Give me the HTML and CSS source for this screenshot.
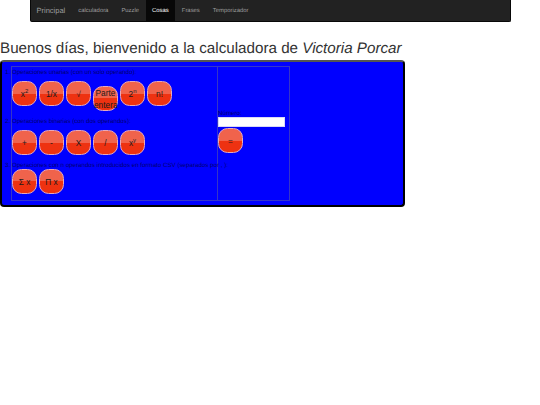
FILE: index.html
```html
<!DOCTYPE html>
<html lang="es">
<head>
<meta charset="utf-8">
<title>Calculadora</title>
<link rel="stylesheet" href="styles.css">
</head>
<body>
<nav class="navbar">
  <a class="brand" href="#">Principal</a>
  <a class="link" href="#">calculadora</a>
  <a class="link" href="#">Puzzle</a>
  <a class="link active" href="#">Cosas</a>
  <a class="link" href="#">Frases</a>
  <a class="link" href="#">Temporizador</a>
</nav>
<h1 class="title">Buenos días, bienvenido a la calculadora de <em>Victoria Porcar</em></h1>
<section class="panel">
  <div class="grid">
    <ol class="ops">
      <li class="op op-unary">
        <p class="label">Operaciones unarias (con un solo operando):</p>
        <div class="keys">
          <button class="key">x<sup>2</sup></button>
          <button class="key">1/x</button>
          <button class="key">√</button>
          <button class="key key-low">Parte entera</button>
          <button class="key">2<sup>n</sup></button>
          <button class="key">n!</button>
        </div>
      </li>
      <li class="op op-binary">
        <p class="label">Operaciones binarias (con dos operandos):</p>
        <div class="keys">
          <button class="key">+</button>
          <button class="key">-</button>
          <button class="key">X</button>
          <button class="key">/</button>
          <button class="key">x<sup>y</sup></button>
        </div>
      </li>
      <li class="op op-csv">
        <p class="label">Operaciones con n operandos introducidos en formato CSV (separados por , ):</p>
        <div class="keys">
          <button class="key">Σ x</button>
          <button class="key">Π x</button>
        </div>
      </li>
    </ol>
    <div class="side">
      <label class="field-label" for="num">Número:</label>
      <input class="field" id="num" type="text">
      <button class="key">=</button>
    </div>
  </div>
</section>
</body>
</html>
```
FILE: styles.css
```css
* { box-sizing: border-box; }
html, body { margin: 0; padding: 0; }
body {
  font-family: "Liberation Sans", Arial, sans-serif;
  background: #fff;
  color: #333;
  width: 540px;
  height: 405px;
  overflow: hidden;
  text-rendering: geometricPrecision;
}
.navbar {
  display: flex;
  align-items: stretch;
  height: 22px;
  margin: 0 29.5px;
  background: #222;
  border: 1px solid #080808;
  border-top: 0;
  border-radius: 0 0 2px 2px;
}
.brand {
  display: flex;
  align-items: center;
  padding: 0 6.5px 0 6px;
  font-size: 7.5px;
  color: #9d9d9d;
  text-decoration: none;
}
.link {
  display: flex;
  align-items: center;
  padding: 0 6.5px;
  font-size: 5.9px;
  color: #9d9d9d;
  text-decoration: none;
}
.link.active { background: #080808; color: #fff; }
.title {
  margin: 17px 0 0;
  font-size: 15.2px;
  line-height: 19px;
  font-weight: 400;
  color: #333;
  white-space: nowrap;
}
.panel {
  width: 405px;
  height: 147px;
  margin-top: 2px;
  padding: 4px 0 0 9px;
  background: #00f;
  border: 2px solid #000;
  border-top-color: #555;
  border-radius: 4px;
}
.grid {
  display: grid;
  grid-template-columns: 206px 72px;
  width: 279px;
  height: 135px;
  border: 1px solid #3535c8;
}
.ops {
  margin: 0;
  padding: 0;
  list-style-position: outside;
  color: #000070;
  font-size: 6.2px;
  border-right: 1px solid #3535c8;
}
.op-unary { height: 49px; }
.op-binary { height: 44px; }
.op-csv { height: 34px; }
.label {
  margin: 0;
  height: 9px;
  padding-top: 2px;
  line-height: 8px;
  white-space: nowrap;
}
.keys {
  display: flex;
  align-items: flex-start;
  gap: 2px;
  margin-top: 5px;
}
.op-csv .keys { margin-top: 0; }
.key {
  flex: none;
  width: 25px;
  height: 25px;
  margin: 0;
  padding: 0;
  font-family: "Liberation Sans", Arial, sans-serif;
  font-size: 8.3px;
  line-height: 12px;
  color: #1a1a1a;
  background: linear-gradient(#f0634c 0, #f0634c 50%, #ee3211 50%, #ee3211 100%);
  border: 1px solid #e8a8b8;
  border-radius: 9.5px;
}
.key-low { margin-top: 5px; }
.key sup { font-size: 6px; line-height: 0; }
.side {
  display: flex;
  flex-direction: column;
  align-items: flex-start;
  padding-top: 41px;
  color: #000070;
  font-size: 6.2px;
}
.field-label { height: 9px; padding-top: 2px; line-height: 8px; }
.field {
  width: 67px;
  height: 10px;
  margin: 0 0 1px;
  padding: 0;
  background: #fff;
  border: 1px solid #d8d8f8;
  border-radius: 0;
}
```
